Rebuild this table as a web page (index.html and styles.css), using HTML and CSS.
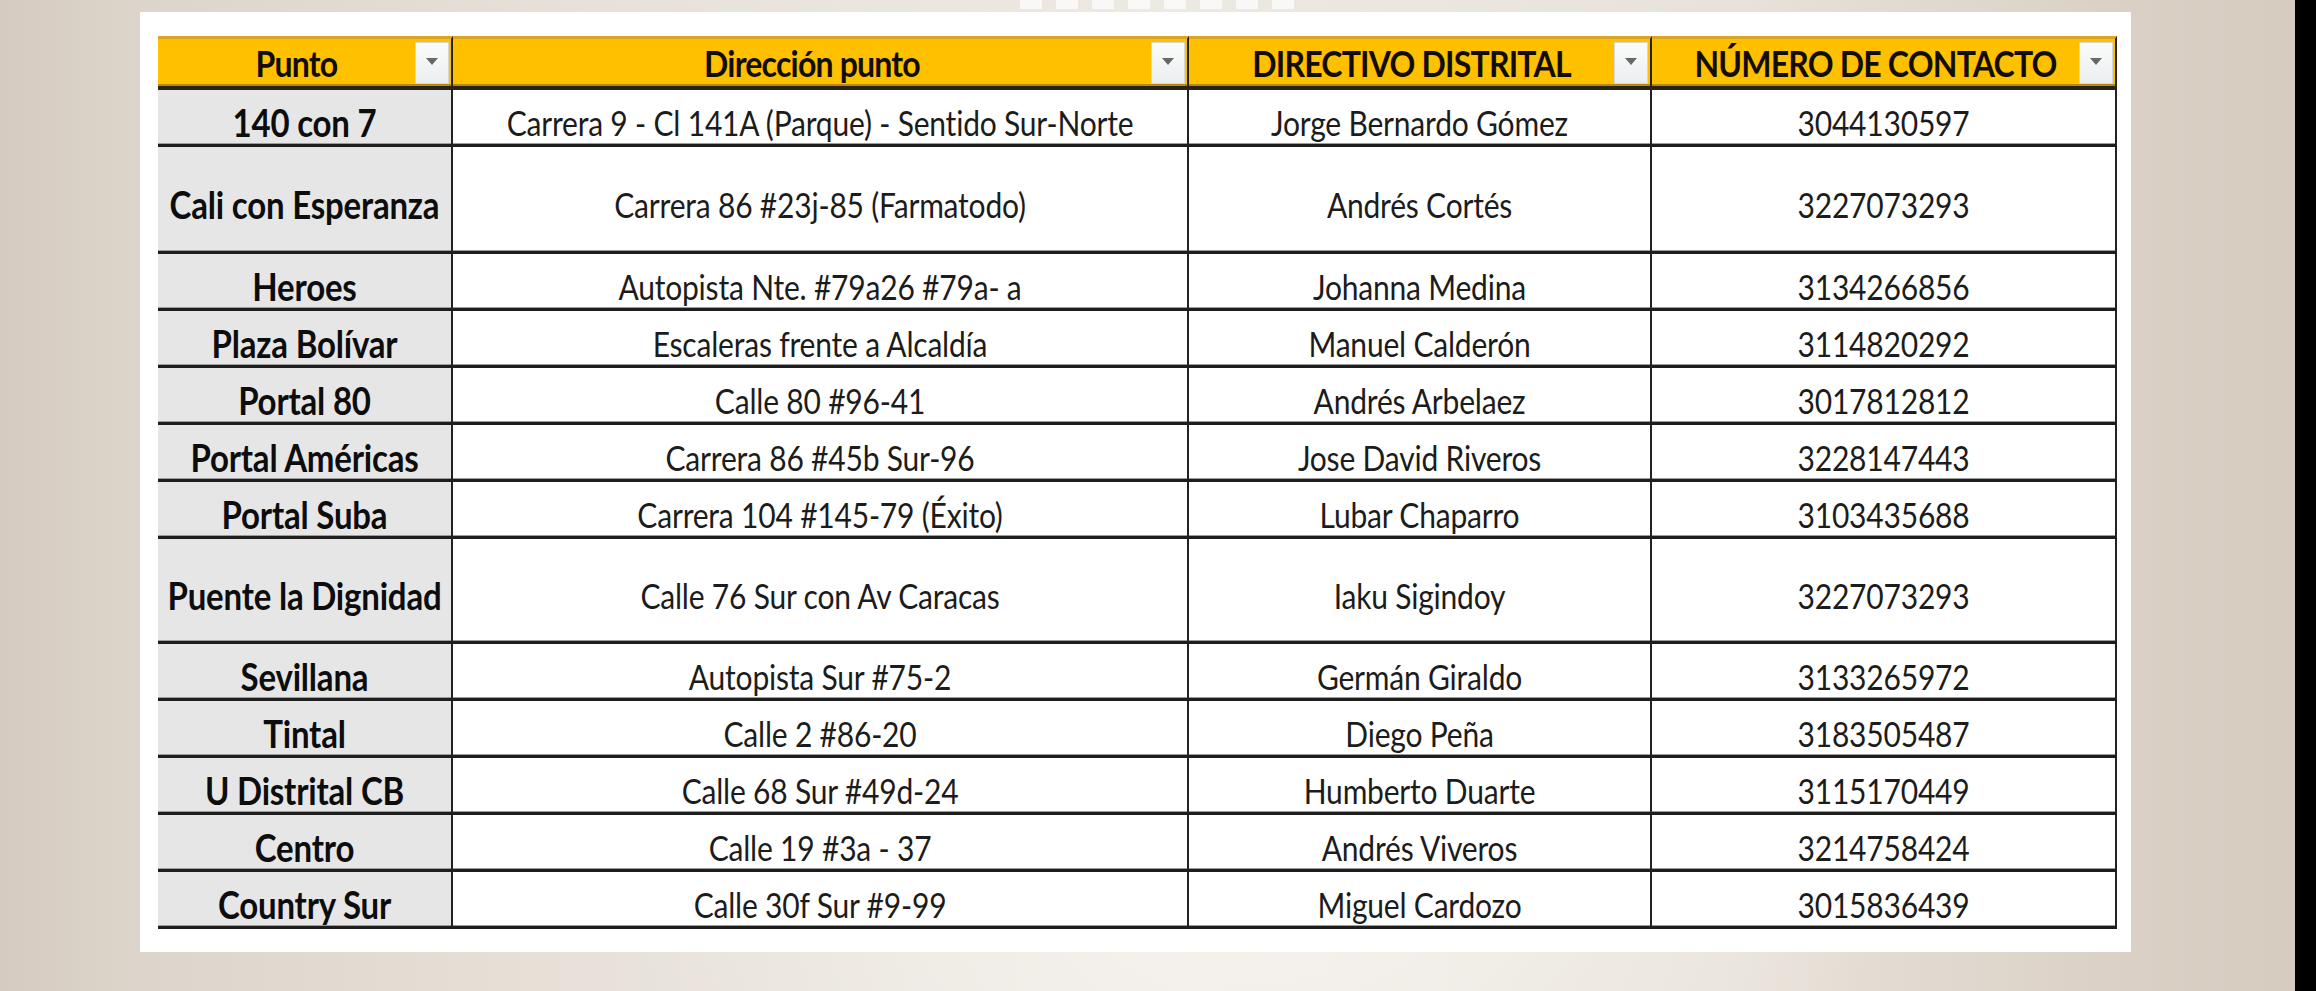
FILE: index.html
```html
<!DOCTYPE html>
<html lang="es">
<head>
<meta charset="utf-8">
<title>Puntos de contacto</title>
<link rel="stylesheet" href="styles.css">
</head>
<body>
<main class="slide">
  <div class="remnants"><span></span><span></span><span></span><span></span><span></span><span></span><span></span><span></span></div>
  <section class="panel">
    <div class="sheet">
      <div class="row head">
        <div class="cell"><span class="htext"><span class="t">Punto</span></span><span class="drop"></span></div>
        <div class="cell"><span class="htext"><span class="t">Dirección punto</span></span><span class="drop"></span></div>
        <div class="cell"><span class="htext"><span class="t">DIRECTIVO DISTRITAL</span></span><span class="drop"></span></div>
        <div class="cell"><span class="htext"><span class="t">NÚMERO DE CONTACTO</span></span><span class="drop"></span></div>
      </div>
      <div class="row"><div class="cell name"><span class="t">140 con 7</span></div><div class="cell"><span class="t">Carrera 9 - Cl 141A (Parque) - Sentido Sur-Norte</span></div><div class="cell"><span class="t">Jorge Bernardo Gómez</span></div><div class="cell"><span class="t">3044130597</span></div></div>
      <div class="row tall"><div class="cell name"><span class="t">Cali con Esperanza</span></div><div class="cell"><span class="t">Carrera 86 #23j-85 (Farmatodo)</span></div><div class="cell"><span class="t">Andrés Cortés</span></div><div class="cell"><span class="t">3227073293</span></div></div>
      <div class="row"><div class="cell name"><span class="t">Heroes</span></div><div class="cell"><span class="t">Autopista Nte. #79a26 #79a- a</span></div><div class="cell"><span class="t">Johanna Medina</span></div><div class="cell"><span class="t">3134266856</span></div></div>
      <div class="row"><div class="cell name"><span class="t">Plaza Bolívar</span></div><div class="cell"><span class="t">Escaleras frente a Alcaldía</span></div><div class="cell"><span class="t">Manuel Calderón</span></div><div class="cell"><span class="t">3114820292</span></div></div>
      <div class="row"><div class="cell name"><span class="t">Portal 80</span></div><div class="cell"><span class="t">Calle 80 #96-41</span></div><div class="cell"><span class="t">Andrés Arbelaez</span></div><div class="cell"><span class="t">3017812812</span></div></div>
      <div class="row"><div class="cell name"><span class="t">Portal Américas</span></div><div class="cell"><span class="t">Carrera 86 #45b Sur-96</span></div><div class="cell"><span class="t">Jose David Riveros</span></div><div class="cell"><span class="t">3228147443</span></div></div>
      <div class="row"><div class="cell name"><span class="t">Portal Suba</span></div><div class="cell"><span class="t">Carrera 104 #145-79 (Éxito)</span></div><div class="cell"><span class="t">Lubar Chaparro</span></div><div class="cell"><span class="t">3103435688</span></div></div>
      <div class="row tall tall-b"><div class="cell name"><span class="t">Puente la Dignidad</span></div><div class="cell"><span class="t">Calle 76 Sur con Av Caracas</span></div><div class="cell"><span class="t">Iaku Sigindoy</span></div><div class="cell"><span class="t">3227073293</span></div></div>
      <div class="row"><div class="cell name"><span class="t">Sevillana</span></div><div class="cell"><span class="t">Autopista Sur #75-2</span></div><div class="cell"><span class="t">Germán Giraldo</span></div><div class="cell"><span class="t">3133265972</span></div></div>
      <div class="row"><div class="cell name"><span class="t">Tintal</span></div><div class="cell"><span class="t">Calle 2 #86-20</span></div><div class="cell"><span class="t">Diego Peña</span></div><div class="cell"><span class="t">3183505487</span></div></div>
      <div class="row"><div class="cell name"><span class="t">U Distrital CB</span></div><div class="cell"><span class="t">Calle 68 Sur #49d-24</span></div><div class="cell"><span class="t">Humberto Duarte</span></div><div class="cell"><span class="t">3115170449</span></div></div>
      <div class="row"><div class="cell name"><span class="t">Centro</span></div><div class="cell"><span class="t">Calle 19 #3a - 37</span></div><div class="cell"><span class="t">Andrés Viveros</span></div><div class="cell"><span class="t">3214758424</span></div></div>
      <div class="row"><div class="cell name"><span class="t">Country Sur</span></div><div class="cell"><span class="t">Calle 30f Sur #9-99</span></div><div class="cell"><span class="t">Miguel Cardozo</span></div><div class="cell"><span class="t">3015836439</span></div></div>
    </div>
  </section>
</main>
<div class="strip"></div>
</body>
</html>
```

FILE: styles.css
```css
* { box-sizing: border-box; }

html, body {
  margin: 0;
  padding: 0;
}

body {
  width: 2316px;
  height: 991px;
  overflow: hidden;
  display: flex;
  font-family: Lato, "Open Sans", sans-serif;
  background:
    radial-gradient(ellipse 900px 500px at 1250px 900px, rgba(247, 244, 239, 0.9), rgba(247, 244, 239, 0) 70%),
    linear-gradient(90deg, #d5cbc0 0%, #ddd5cb 6%, #e7e1d9 25%, #ede9e3 50%, #e8e2da 75%, #dad0c5 92%, #d6cbbf 100%);
}

.slide {
  flex: 1;
  display: flex;
  flex-direction: column;
  padding-left: 140px;
}

.remnants {
  height: 12px;
  display: flex;
  gap: 14px;
  padding-left: 880px;
}

.remnants span {
  width: 22px;
  height: 9px;
  background: rgba(255, 255, 255, 0.7);
}

.panel {
  width: 1991px;
  height: 940px;
  background: #ffffff;
  padding: 24px 14px 0 18px;
}

.sheet {
  width: 1959px;
  display: flex;
  flex-direction: column;
}

.row {
  display: grid;
  grid-template-columns: 295px 736px 463px 465px;
  height: 57px;
}

.row.tall {
  height: 107px;
}

.row.tall-b {
  height: 105px;
}

.cell {
  display: flex;
  align-items: center;
  justify-content: center;
  border-bottom: 3px solid #1e1e1e;
  border-right: 2px solid #222222;
  box-shadow: inset 0 -1px 0 #9c9c9c;
  font-size: 30px;
  color: #1c1c1c;
  white-space: nowrap;
  background: #ffffff;
  padding-top: 10px;
  letter-spacing: -0.2px;
}

.t {
  display: inline-block;
  transform: scaleY(1.14);
}

.cell.name {
  background: #e6e6e6;
  font-weight: 700;
  font-size: 33px;
  color: #0d0d0d;
}

.row.head {
  height: 54px;
}

.head .cell {
  background: #ffc000;
  border-top: 3px solid #d9a623;
  border-bottom: 4px solid #2a2418;
  box-shadow: inset 0 -2px 0 #b8890c;
  font-weight: 700;
  font-size: 32px;
  letter-spacing: -0.8px;
  color: #120e05;
  padding: 0 2px 0 0;
}

.htext {
  flex: 1;
  text-align: center;
  padding-left: 20px;
}

.drop {
  width: 34px;
  height: 42px;
  flex: none;
  display: flex;
  align-items: center;
  justify-content: center;
  background: linear-gradient(#fbfbfb, #eceef1);
  border: 1px solid #d6d6d6;
}

.drop::before {
  content: "";
  width: 0;
  height: 0;
  border-left: 6px solid transparent;
  border-right: 6px solid transparent;
  border-top: 7px solid #676767;
  margin-top: -2px;
}

.strip {
  width: 21px;
  flex: none;
  background: #000000;
}
```
